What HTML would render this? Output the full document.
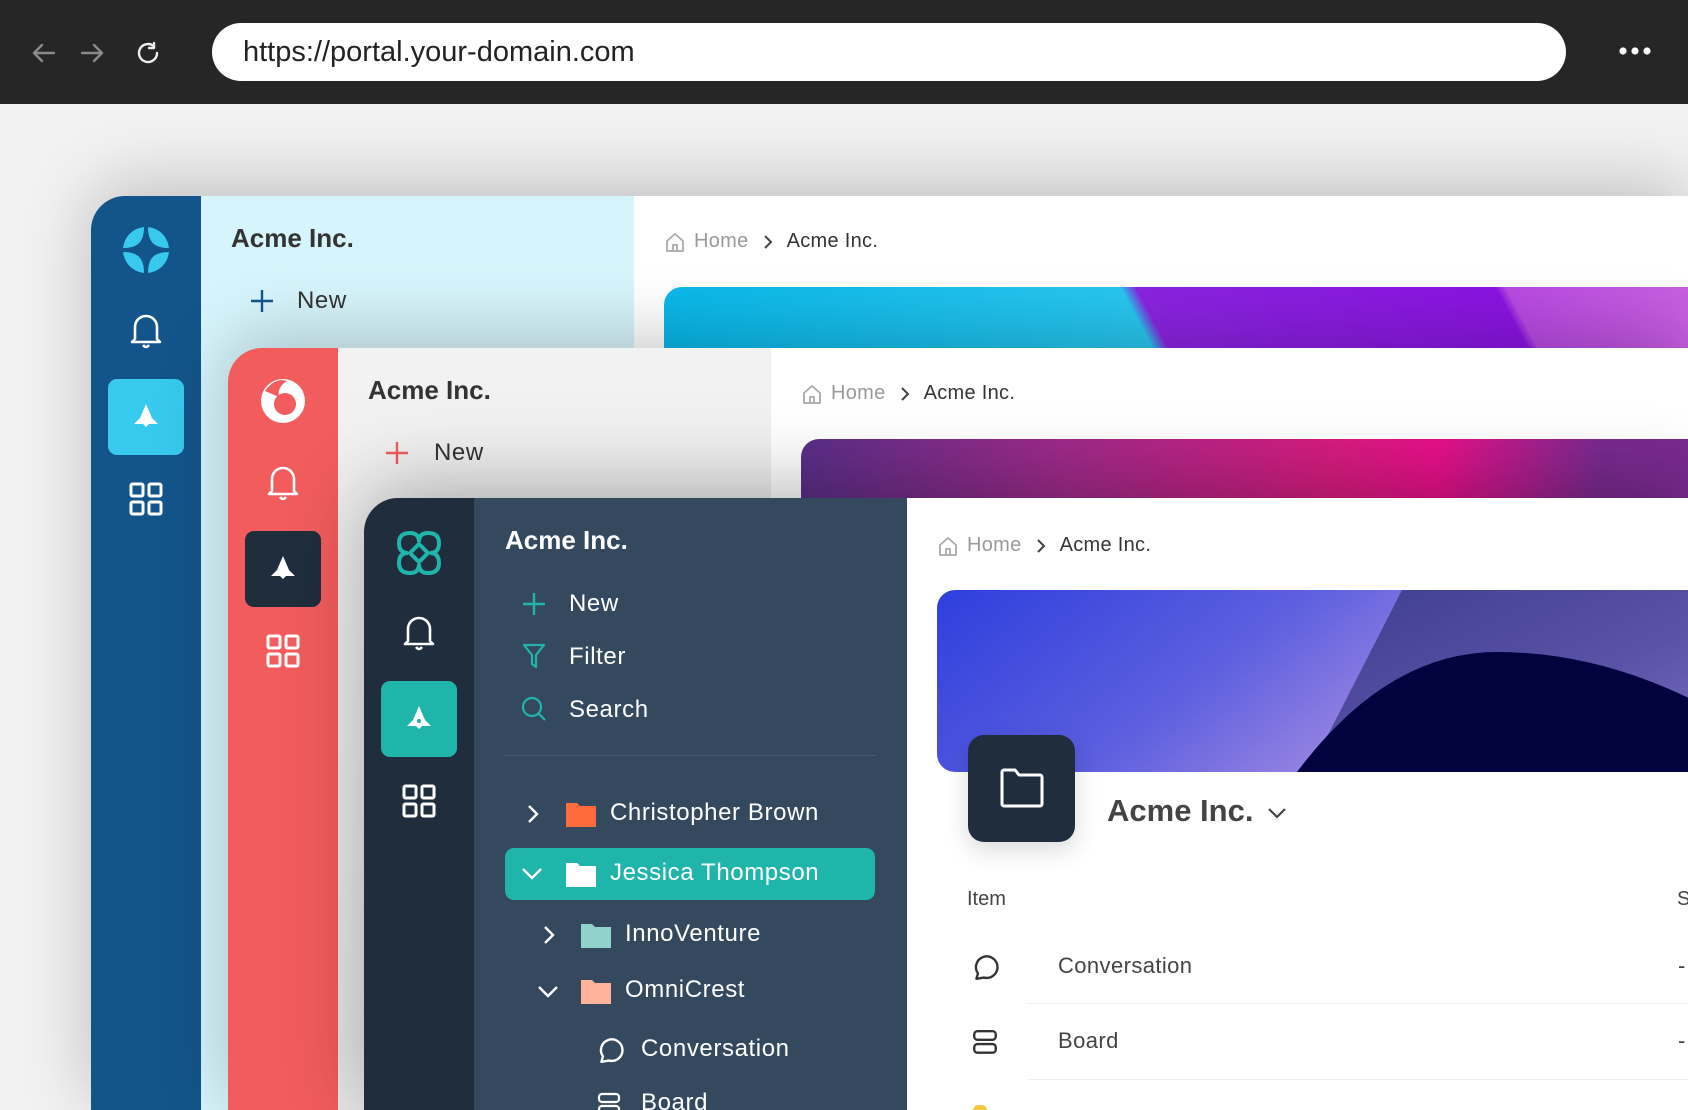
<!DOCTYPE html>
<html><head><meta charset="utf-8">
<style>
*{margin:0;padding:0;box-sizing:border-box}
body{width:1688px;height:1110px;overflow:hidden;background:#f2f2f2;font-family:"Liberation Sans",sans-serif;position:relative}
.top{position:absolute;left:0;top:0;width:1688px;height:104px;background:#262626}
.url{position:absolute;left:212px;top:23px;width:1354px;height:58px;border-radius:29px;background:#fff;font-size:29px;color:#222;padding-left:31px;line-height:58px;letter-spacing:0px}
.win{position:absolute;right:0;bottom:0;overflow:hidden;border-top-left-radius:34px;box-shadow:0 -10px 70px rgba(0,0,0,.22)}
.rail{position:absolute;left:0;top:0;width:110px;height:100%}
.panel{position:absolute;left:110px;top:0;width:433px;height:100%}
.main{position:absolute;left:543px;top:0;right:0;height:100%;background:#fff}
.abs{position:absolute}
.title{position:absolute;left:140px;top:27px;font-size:26px;font-weight:bold;letter-spacing:0px}
.item{position:absolute;font-size:24px;line-height:30px;letter-spacing:0.6px}
.bc{position:absolute;left:573px;top:34px;font-size:20px;color:#999;display:flex;align-items:center;gap:0;letter-spacing:0.3px}
.bc b{font-weight:normal;color:#333}
.act{position:absolute;left:17px;top:183px;width:76px;height:76px;border-radius:9px}
</style></head><body>
<div class="top">
  <svg class="abs" style="left:30px;top:40px" width="130" height="26" viewBox="0 0 130 26" fill="none" stroke-width="2.4" stroke-linecap="round" stroke-linejoin="round">
    <path d="M24 13H4M12 5l-8 8 8 8" stroke="#8a8a8a"/>
    <path d="M52 13h20M64 5l8 8-8 8" stroke="#8a8a8a"/>
    <path d="M130 13a9 9 0 1 1-3-6.7" stroke="#eee" transform="translate(-3,0)"/>
    <path d="M127 3v5h-5" stroke="#eee" transform="translate(-3,0)"/>
  </svg>
  <div class="url">https://portal.your-domain.com</div>
  <svg class="abs" style="left:1618px;top:46px" width="34" height="10"><circle cx="5" cy="5" r="3.6" fill="#fff"/><circle cx="17" cy="5" r="3.6" fill="#fff"/><circle cx="29" cy="5" r="3.6" fill="#fff"/></svg>
</div>

<!-- Window 1 -->
<div class="win" style="left:91px;top:196px">
  <div class="rail" style="background:#13548a">
    <svg class="abs" style="left:30px;top:29px" width="50" height="50" viewBox="0 0 50 50"><circle cx="25" cy="25" r="23" fill="#38c9ee"/><path d="M25 2C25 18 18 25 2 25M25 2C25 18 32 25 48 25M25 48C25 32 18 25 2 25M25 48C25 32 32 25 48 25" stroke="#13548a" stroke-width="4" fill="none"/><path d="M25 8Q26 24 42 25Q26 26 25 42Q24 26 8 25Q24 24 25 8Z" fill="#13548a"/></svg>
    <svg class="abs" style="left:38px;top:116px" width="34" height="38" viewBox="0 0 34 38" fill="none" stroke="#fff" stroke-width="2.6" stroke-linejoin="round"><path d="M6 27V15a11 11 0 0 1 22 0v12l3 3H3z"/><path d="M14 33q3 4 6 0"/></svg>
    <div class="act" style="background:#38c9ee"></div>
    <svg class="abs" style="left:41px;top:206px" width="28" height="26" viewBox="0 0 28 26"><path d="M14 2L20 16L26 22H17L14 25L11 22H2L8 16Z" fill="#fff"/></svg>
    <svg class="abs" style="left:38px;top:286px" width="34" height="34" viewBox="0 0 34 34" fill="none" stroke="#fff" stroke-width="3"><rect x="2" y="2" width="12" height="12" rx="1.5"/><rect x="20" y="2" width="12" height="12" rx="1.5"/><rect x="2" y="20" width="12" height="12" rx="1.5"/><rect x="20" y="20" width="12" height="12" rx="1.5"/></svg>
  </div>
  <div class="panel" style="background:#d6f4fb">
    <div class="title" style="left:30px;color:#333">Acme Inc.</div>
    <svg class="abs" style="left:49px;top:93px" width="24" height="24" stroke="#13548a" stroke-width="2.4"><path d="M12 1v22M1 12h22"/></svg>
    <div class="item" style="left:96px;top:90px;color:#333">New</div>
  </div>
  <div class="main">
    <div class="bc" style="left:30px;top:34px"><svg width="22" height="22" viewBox="0 0 22 22" fill="none" stroke="#aaa" stroke-width="1.8"><path d="M3 10L11 3l8 7v10H3z M9 20v-6h4v6"/></svg><span style="margin-left:8px">Home</span><svg style="margin:0 14px 0 14px" width="10" height="16" stroke="#444" stroke-width="2" fill="none"><path d="M2 2l6 6-6 6"/></svg><b>Acme Inc.</b></div>
    <div class="abs" style="left:30px;top:91px;right:0;height:90px;border-top-left-radius:18px;background:linear-gradient(62deg,#08b6e8 0%,#28c6ef 47%,#8a24e0 48.5%,#8a14e0 82%,#b84ae2 83%,#c860e0 100%)"></div>
  </div>
</div>

<!-- Window 2 -->
<div class="win" style="left:228px;top:348px">
  <div class="rail" style="background:#f25c5c">
    <svg class="abs" style="left:29px;top:27px" width="52" height="52" viewBox="0 0 52 52"><circle cx="26" cy="26" r="22" fill="#fff"/><circle cx="28" cy="29" r="11" fill="#f25c5c"/><path d="M8 16Q18 2 30 6Q20 12 22 22Z" fill="#f25c5c"/></svg>
    <svg class="abs" style="left:38px;top:116px" width="34" height="38" viewBox="0 0 34 38" fill="none" stroke="#fff" stroke-width="2.6" stroke-linejoin="round"><path d="M6 27V15a11 11 0 0 1 22 0v12l3 3H3z"/><path d="M14 33q3 4 6 0"/></svg>
    <div class="act" style="background:#1f2d3d"></div>
    <svg class="abs" style="left:41px;top:206px" width="28" height="26" viewBox="0 0 28 26"><path d="M14 2L20 16L26 22H17L14 25L11 22H2L8 16Z" fill="#fff"/></svg>
    <svg class="abs" style="left:38px;top:286px" width="34" height="34" viewBox="0 0 34 34" fill="none" stroke="#fff" stroke-width="3"><rect x="2" y="2" width="12" height="12" rx="1.5"/><rect x="20" y="2" width="12" height="12" rx="1.5"/><rect x="2" y="20" width="12" height="12" rx="1.5"/><rect x="20" y="20" width="12" height="12" rx="1.5"/></svg>
  </div>
  <div class="panel" style="background:linear-gradient(#f2f2f2,#e6e6e6)">
    <div class="title" style="left:30px;color:#333">Acme Inc.</div>
    <svg class="abs" style="left:47px;top:93px" width="24" height="24" stroke="#f25c5c" stroke-width="2.4"><path d="M12 1v22M1 12h22"/></svg>
    <div class="item" style="left:96px;top:90px;color:#333">New</div>
  </div>
  <div class="main">
    <div class="bc" style="left:30px;top:34px"><svg width="22" height="22" viewBox="0 0 22 22" fill="none" stroke="#aaa" stroke-width="1.8"><path d="M3 10L11 3l8 7v10H3z M9 20v-6h4v6"/></svg><span style="margin-left:8px">Home</span><svg style="margin:0 14px" width="10" height="16" stroke="#444" stroke-width="2" fill="none"><path d="M2 2l6 6-6 6"/></svg><b>Acme Inc.</b></div>
    <div class="abs" style="left:30px;top:91px;right:0;height:90px;border-top-left-radius:18px;background:linear-gradient(90deg,#5a2e88 0%,#a02a8a 30%,#d81c80 60%,#e8108a 72%,#7a2a90 90%)"></div>
  </div>
</div>

<!-- Window 3 -->
<div class="win" style="left:364px;top:498px;box-shadow:0 -10px 80px rgba(0,0,0,.3)">
  <div class="rail" style="background:#1f2d3d">
    <svg class="abs" style="left:31px;top:32px" width="48" height="46" viewBox="0 0 48 46" fill="none" stroke="#20b5aa" stroke-width="4"><path d="M24 12Q24 3 15 3Q4 3 4 13Q4 23 13 23Q4 23 4 33Q4 43 15 43Q24 43 24 34Q24 43 33 43Q44 43 44 33Q44 23 35 23Q44 23 44 13Q44 3 33 3Q24 3 24 12Z"/><path d="M24 14L33 23L24 32L15 23Z"/></svg>
    <svg class="abs" style="left:38px;top:116px" width="34" height="38" viewBox="0 0 34 38" fill="none" stroke="#fff" stroke-width="2.6" stroke-linejoin="round"><path d="M6 27V15a11 11 0 0 1 22 0v12l3 3H3z"/><path d="M14 33q3 4 6 0"/></svg>
    <div class="act" style="background:#20b5aa"></div>
    <svg class="abs" style="left:41px;top:206px" width="28" height="26" viewBox="0 0 28 26"><path d="M14 2L20 16L26 22H17L14 25L11 22H2L8 16Z" fill="#fff"/><circle cx="14" cy="17" r="2" fill="#20b5aa"/></svg>
    <svg class="abs" style="left:38px;top:286px" width="34" height="34" viewBox="0 0 34 34" fill="none" stroke="#fff" stroke-width="3"><rect x="2" y="2" width="12" height="12" rx="1.5"/><rect x="20" y="2" width="12" height="12" rx="1.5"/><rect x="2" y="20" width="12" height="12" rx="1.5"/><rect x="20" y="20" width="12" height="12" rx="1.5"/></svg>
  </div>
  <div class="panel" style="background:#34495e;color:#fff">
    <div class="title" style="left:31px;color:#fff">Acme Inc.</div>
    <svg class="abs" style="left:48px;top:94px" width="24" height="24" stroke="#20b5aa" stroke-width="2.4"><path d="M12 1v22M1 12h22"/></svg>
    <div class="item" style="left:95px;top:91px">New</div>
    <svg class="abs" style="left:48px;top:145px" width="24" height="26" viewBox="0 0 24 26" fill="none" stroke="#20b5aa" stroke-width="2.2" stroke-linejoin="round"><path d="M2 2h20l-8 10v12l-4-3V12z"/></svg>
    <div class="item" style="left:95px;top:144px">Filter</div>
    <svg class="abs" style="left:47px;top:198px" width="26" height="26" viewBox="0 0 26 26" fill="none" stroke="#20b5aa" stroke-width="2.2"><circle cx="11" cy="11" r="9"/><path d="M18 18l6 6"/></svg>
    <div class="item" style="left:95px;top:197px">Search</div>
    <div class="abs" style="left:31px;top:257px;width:370px;border-top:1px dotted #5a6b7c"></div>
    <svg class="abs" style="left:52px;top:305px" width="14" height="22" stroke="#fff" stroke-width="2.4" fill="none"><path d="M3 3l8 8-8 8"/></svg>
    <svg class="abs" style="left:92px;top:303px" width="30" height="26" viewBox="0 0 30 26"><path d="M0 2h11l3 3h16v21H0z" fill="#ff6b3d"/></svg>
    <div class="item" style="left:136px;top:300px">Christopher Brown</div>
    <div class="abs" style="left:31px;top:350px;width:370px;height:52px;border-radius:9px;background:#20b5aa"></div>
    <svg class="abs" style="left:46px;top:368px" width="24" height="16" stroke="#fff" stroke-width="2.4" fill="none"><path d="M3 3l9 9 9-9"/></svg>
    <svg class="abs" style="left:92px;top:363px" width="30" height="26" viewBox="0 0 30 26"><path d="M0 2h11l3 3h16v21H0z" fill="#fff"/></svg>
    <div class="item" style="left:136px;top:360px">Jessica Thompson</div>
    <svg class="abs" style="left:68px;top:426px" width="14" height="22" stroke="#fff" stroke-width="2.4" fill="none"><path d="M3 3l8 8-8 8"/></svg>
    <svg class="abs" style="left:107px;top:424px" width="30" height="26" viewBox="0 0 30 26"><path d="M0 2h11l3 3h16v21H0z" fill="#8fd3cc"/></svg>
    <div class="item" style="left:151px;top:421px">InnoVenture</div>
    <svg class="abs" style="left:62px;top:486px" width="24" height="16" stroke="#fff" stroke-width="2.4" fill="none"><path d="M3 3l9 9 9-9"/></svg>
    <svg class="abs" style="left:107px;top:480px" width="30" height="26" viewBox="0 0 30 26"><path d="M0 2h11l3 3h16v21H0z" fill="#ffb29a"/></svg>
    <div class="item" style="left:151px;top:477px">OmniCrest</div>
    <svg class="abs" style="left:122px;top:538px" width="28" height="28" viewBox="0 0 26 26" fill="none" stroke="#fff" stroke-width="2.2"><path d="M5 24l1.5-5A10 10 0 1 1 12 22.8z" stroke-linejoin="round"/></svg>
    <div class="item" style="left:167px;top:536px">Conversation</div>
    <svg class="abs" style="left:122px;top:594px" width="26" height="26" viewBox="0 0 26 26" fill="none" stroke="#fff" stroke-width="2.2"><rect x="3" y="2" width="20" height="8" rx="3"/><rect x="3" y="14" width="20" height="8" rx="3"/></svg>
    <div class="item" style="left:167px;top:590px">Board</div>
  </div>
  <div class="main">
    <div class="bc" style="left:30px;top:36px"><svg width="22" height="22" viewBox="0 0 22 22" fill="none" stroke="#aaa" stroke-width="1.8"><path d="M3 10L11 3l8 7v10H3z M9 20v-6h4v6"/></svg><span style="margin-left:8px">Home</span><svg style="margin:0 14px" width="10" height="16" stroke="#444" stroke-width="2" fill="none"><path d="M2 2l6 6-6 6"/></svg><b>Acme Inc.</b></div>
    <div class="abs" style="left:30px;top:92px;right:0;height:182px;border-top-left-radius:18px;border-bottom-left-radius:18px;overflow:hidden">
      <svg class="abs" style="left:0;top:0" width="760" height="182" viewBox="0 0 760 182">
        <defs>
          <linearGradient id="g1" x1="0" y1="0" x2="1" y2="0.3"><stop offset="0" stop-color="#2e3fdd"/><stop offset="0.45" stop-color="#5c5fdf"/><stop offset="0.75" stop-color="#9a85e2"/><stop offset="1" stop-color="#d0b0ee"/></linearGradient>
          <linearGradient id="g2" x1="0" y1="0" x2="1" y2="1"><stop offset="0" stop-color="#3e3e90"/><stop offset="0.6" stop-color="#5a52a6"/><stop offset="1" stop-color="#7a70c0"/></linearGradient>
        </defs>
        <rect width="760" height="182" fill="url(#g1)"/>
        <path d="M465 0H760V182H372Z" fill="url(#g2)"/>
        <path d="M360 182Q450 62 560 62Q660 62 760 112V182Z" fill="#02023f"/>
      </svg>
    </div>
    <div class="abs" style="left:61px;top:237px;width:107px;height:107px;border-radius:16px;background:#1f2d3d;box-shadow:0 8px 24px rgba(0,0,0,.15)">
      <svg class="abs" style="left:31px;top:32px" width="46" height="42" viewBox="0 0 46 42" fill="none" stroke="#fff" stroke-width="3" stroke-linejoin="round"><path d="M3 5a2 2 0 0 1 2-2h11l4 5h21a2 2 0 0 1 2 2v27a2 2 0 0 1-2 2H5a2 2 0 0 1-2-2z"/></svg>
    </div>
    <div class="abs" style="left:200px;top:295px;font-size:31px;color:#444;font-weight:bold;letter-spacing:0px">Acme Inc.</div>
    <svg class="abs" style="left:360px;top:308px" width="20" height="14" stroke="#444" stroke-width="2.2" fill="none"><path d="M2 3l8 8 8-8"/></svg>
    <div class="abs" style="left:60px;top:390px;font-size:20px;color:#444">Item</div>
    <div class="abs" style="left:770px;top:390px;font-size:20px;color:#444">S</div>
    <svg class="abs" style="left:64px;top:455px" width="28" height="28" viewBox="0 0 26 26" fill="none" stroke="#333" stroke-width="2.2"><path d="M5 24l1.5-5A10 10 0 1 1 12 22.8z" stroke-linejoin="round"/></svg>
    <div class="abs" style="left:151px;top:455px;font-size:22px;color:#444;letter-spacing:0.4px">Conversation</div>
    <div class="abs" style="left:771px;top:455px;font-size:22px;color:#444">-</div>
    <div class="abs" style="left:121px;top:505px;right:0;border-top:1.5px solid #eee"></div>
    <svg class="abs" style="left:64px;top:531px" width="28" height="28" viewBox="0 0 26 26" fill="none" stroke="#333" stroke-width="2.2"><rect x="3" y="2" width="20" height="8" rx="3"/><rect x="3" y="14" width="20" height="8" rx="3"/></svg>
    <div class="abs" style="left:151px;top:530px;font-size:22px;color:#444;letter-spacing:0.4px">Board</div>
    <div class="abs" style="left:771px;top:530px;font-size:22px;color:#444">-</div>
    <div class="abs" style="left:121px;top:581px;right:0;border-top:1.5px solid #eee"></div>
    <div class="abs" style="left:66px;top:607px;width:14px;height:10px;border-radius:5px 5px 0 0;background:#f5c842"></div>
  </div>
</div>
</body></html>
